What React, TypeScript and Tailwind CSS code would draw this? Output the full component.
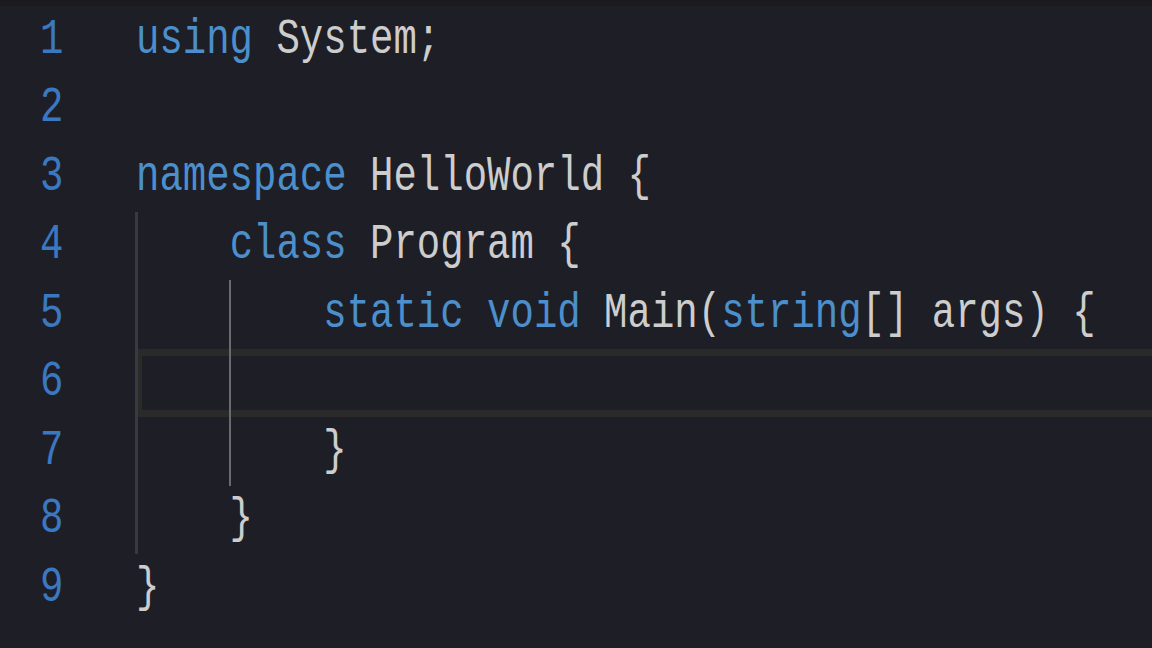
const kw = "text-[#4b8fcc]";
const tx = "text-[#cdcdcd]";

type Tok = { t: string; k?: boolean };

const lines: Tok[][] = [
  [{ t: "using", k: true }, { t: " System;" }],
  [],
  [{ t: "namespace", k: true }, { t: " HelloWorld {" }],
  [{ t: "    " }, { t: "class", k: true }, { t: " Program {" }],
  [
    { t: "        " },
    { t: "static", k: true },
    { t: " " },
    { t: "void", k: true },
    { t: " Main(" },
    { t: "string", k: true },
    { t: "[] args) {" },
  ],
  [],
  [{ t: "        }" }],
  [{ t: "    }" }],
  [{ t: "}" }],
];

function Line({ n, toks }: { n: number; toks: Tok[] }) {
  const active = n === 6;
  return (
    <div className="flex h-[68.5px] items-center">
      <div className="w-[136px] shrink-0 pl-[40px] text-[#3b78c2]">
        <span className="inline-block scale-y-[1.3]">{n}</span>
      </div>
      {active ? (
        <div className="ml-[2px] h-full flex-1 border-y-[7px] border-l-[4px] border-[#2a2a2b]" />
      ) : (
        <div className="whitespace-pre">
          <span className="inline-block scale-y-[1.3]">
            {toks.map((tk, i) => (
              <span key={i} className={tk.k ? kw : tx}>
                {tk.t}
              </span>
            ))}
          </span>
        </div>
      )}
    </div>
  );
}

export default function App() {
  return (
    <div className="h-[648px] w-[1152px] overflow-hidden bg-[#1e1f26] font-['Courier_New','Nimbus_Mono_PS','FreeMono','Liberation_Mono',monospace] text-[39px] leading-none">
      <div className="h-[6px] bg-[#1a1a1f]" />
      <div className="relative">
        {/* indent guides */}
        <div className="absolute left-[135px] top-[205.5px] h-[342.5px] w-[3px] bg-[#3a3a3c]" />
        <div className="absolute left-[229px] top-[274px] h-[205.5px] w-[2px] bg-[#6a6a6c]" />
        {lines.map((toks, i) => (
          <Line key={i} n={i + 1} toks={toks} />
        ))}
      </div>
    </div>
  );
}
